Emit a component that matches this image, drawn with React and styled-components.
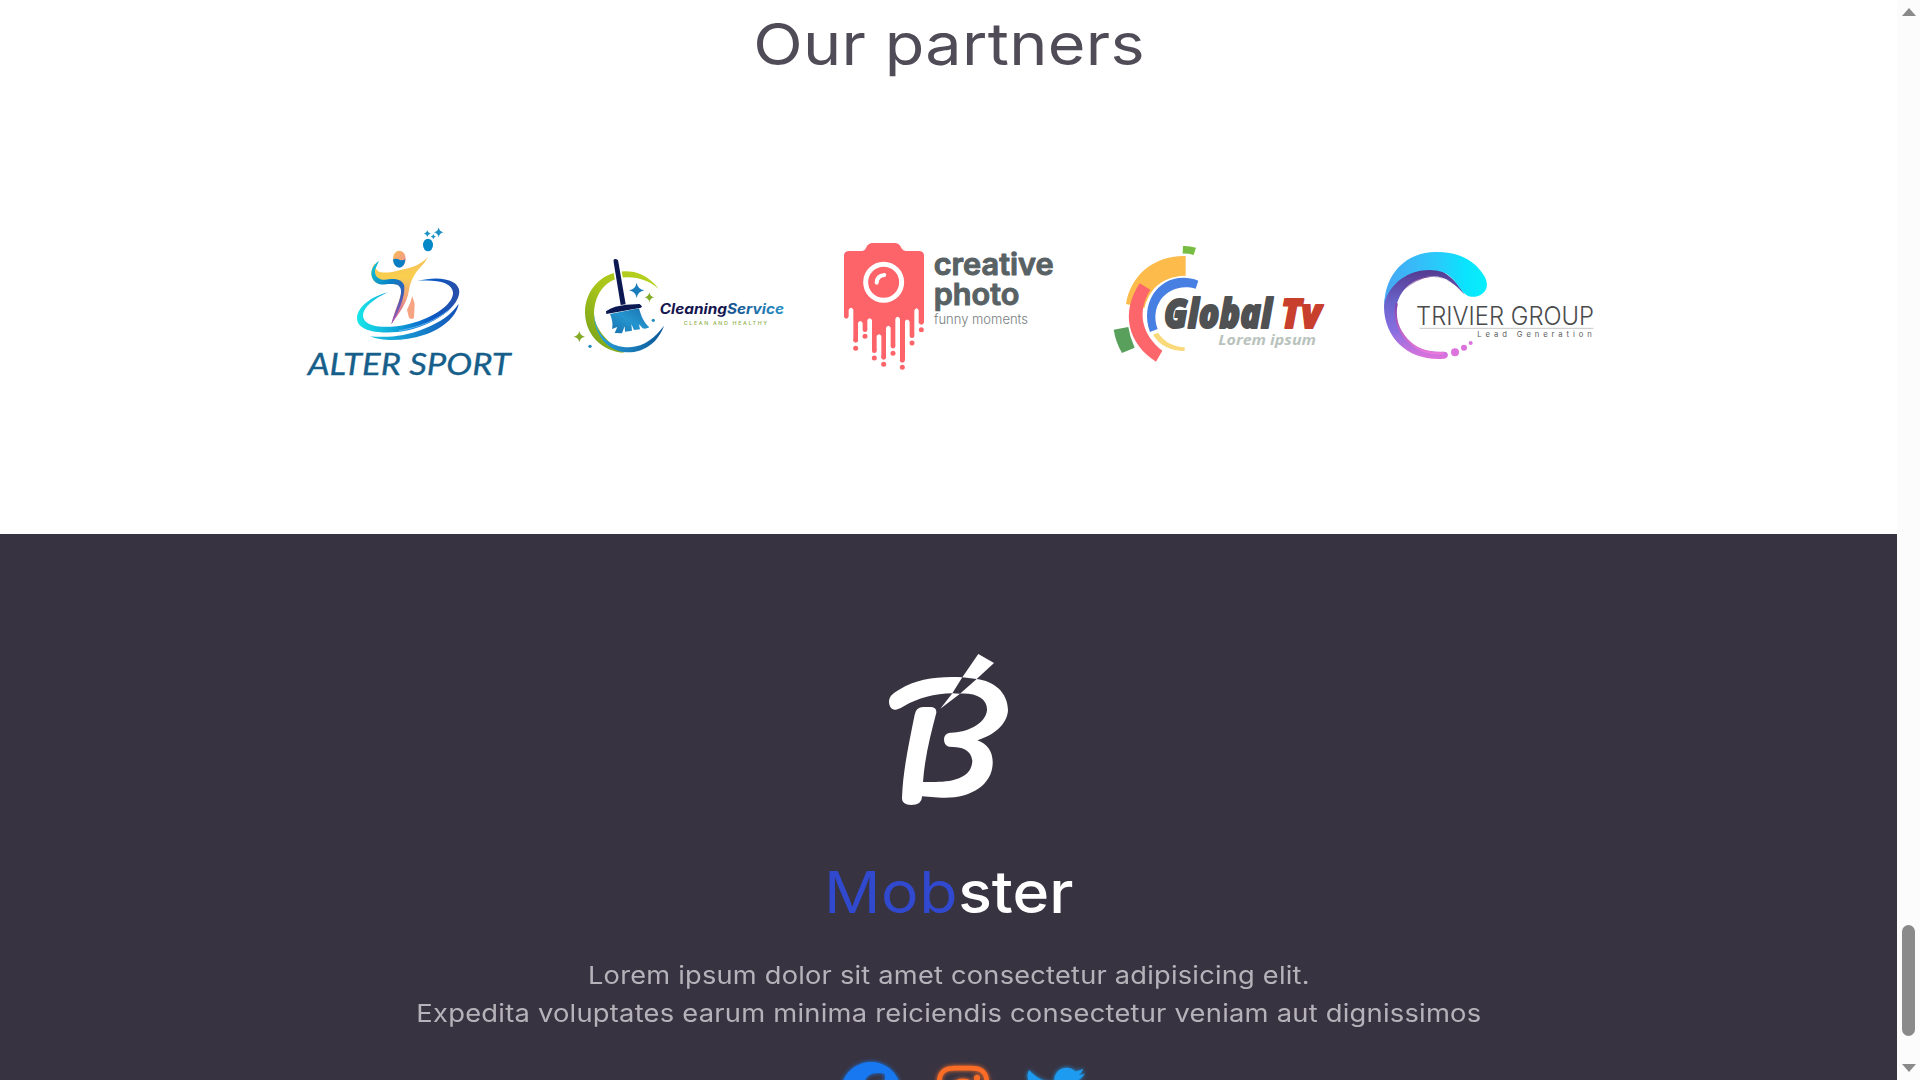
import React from "react";
import styled, { createGlobalStyle } from "styled-components";
import { FaFacebook, FaInstagram, FaTwitter } from "react-icons/fa6";

const GlobalStyle = createGlobalStyle`
  * { box-sizing: border-box; }
  body { margin: 0; overflow: hidden; background: #fff; }
`;

const Page = styled.div`
  display: grid;
  grid-template-columns: 1fr 23px;
  height: 1080px;
  overflow: hidden;
  font-family: Inter, "Liberation Sans", sans-serif;
`;

const Content = styled.main`
  display: flex;
  flex-direction: column;
  min-width: 0;
  height: 1080px;
  overflow: hidden;
`;

const Partners = styled.section`
  flex: none;
  height: 534px;
  background: #fff;
`;

const Title = styled.h2`
  margin: 0;
  padding: 8px 0 0 1px;
  height: 215px;
  font-size: 58px;
  line-height: 72px;
  font-weight: 430;
  letter-spacing: 0.3px;
  text-align: center;
  color: #504c57;
  transform: scaleX(1.115);
`;

const LogoRow = styled.div`
  display: flex;
  gap: 40px;
  padding-left: 295px;
`;

const Logo = styled.svg`
  display: block;
  flex: none;
  width: 230px;
  height: 170px;
`;

const Footer = styled.footer`
  flex: 1;
  display: flex;
  flex-direction: column;
  align-items: center;
  padding-top: 106px;
  background: #383341;
`;

const BrandMark = styled.svg`
  display: block;
  flex: none;
  width: 160px;
  height: 180px;
  margin-left: 3px;
`;

const BrandName = styled.h2`
  margin: 36px 0 0 1px;
  font-size: 58px;
  line-height: 72px;
  font-weight: 500;
  color: #fff;
  transform: scaleX(1.078);
`;

const Accent = styled.span`
  font-weight: 400;
  letter-spacing: 0.6px;
  color: #3149cf;
`;

const Tagline = styled.p`
  margin: 28px 0 0;
  font-size: 24.6px;
  line-height: 38px;
  text-align: center;
  color: #b5b2b9;
`;

const Line = styled.span`
  display: block;
  letter-spacing: 0.2px;
  transform: scaleX(${(p) => p.$stretch});
`;

const Socials = styled.div`
  display: flex;
  gap: 32px;
  margin: 30px 0 0 29px;
  font-size: 60px;
`;

const Social = styled.a`
  display: flex;
  color: ${(p) => p.$color};
  filter: drop-shadow(0 0 2px ${(p) => p.$color});
`;

const Scrollbar = styled.aside`
  display: flex;
  flex-direction: column;
  align-items: center;
  padding: 8px 0;
  background: #fcfcfc;
`;

const Arrow = styled.span`
  width: 0;
  height: 0;
  border: 7.5px solid transparent;
  border-top-width: ${(p) => (p.$up ? "0" : "8px")};
  border-bottom-width: ${(p) => (p.$up ? "8px" : "0")};
  border-top-color: ${(p) => (p.$up ? "transparent" : "#8a8a8a")};
  border-bottom-color: ${(p) => (p.$up ? "#8a8a8a" : "transparent")};
`;

const Thumb = styled.span`
  width: 13px;
  height: 111px;
  margin: 909px 0 28px;
  border-radius: 7px;
  background: #8a8a8a;
`;

const star = (x, y, r) =>
  `M${x} ${y - r}Q${x + r * 0.15} ${y - r * 0.15} ${x + r} ${y}Q${x + r * 0.15} ${y + r * 0.15} ${x} ${y + r}Q${x - r * 0.15} ${y + r * 0.15} ${x - r} ${y}Q${x - r * 0.15} ${y - r * 0.15} ${x} ${y - r}Z`;

function AlterSport() {
  return (
    <Logo viewBox="0 0 690 510">
      <defs>
        <linearGradient id="as-ring" x1="0" y1="0" x2="1" y2="0">
          <stop offset="0" stopColor="#18e6e8" />
          <stop offset=".45" stopColor="#0d96d8" />
          <stop offset=".75" stopColor="#0b56c4" />
          <stop offset="1" stopColor="#2a4fa8" />
        </linearGradient>
        <linearGradient id="as-ring2" x1="0" y1="0" x2="1" y2="0">
          <stop offset="0" stopColor="#17c6e3" />
          <stop offset="1" stopColor="#1450b8" />
        </linearGradient>
        <linearGradient id="as-blue" x1="0" y1="0" x2=".7" y2="1">
          <stop offset="0" stopColor="#14c9d6" />
          <stop offset=".5" stopColor="#0a80c6" />
          <stop offset=".8" stopColor="#3a5bb5" />
          <stop offset="1" stopColor="#b454b4" />
        </linearGradient>
        <linearGradient id="as-gold" x1="0" y1="0" x2="0" y2="1">
          <stop offset="0" stopColor="#f7c05a" />
          <stop offset=".3" stopColor="#f9cf4e" />
          <stop offset=".6" stopColor="#f3a27c" />
          <stop offset="1" stopColor="#b94fae" />
        </linearGradient>
        <linearGradient id="as-head" x1="0" y1="0" x2="1" y2="1">
          <stop offset="0" stopColor="#f9bd52" />
          <stop offset="1" stopColor="#f08e9a" />
        </linearGradient>
      </defs>
      <path d="M278 232C226 246 188 277 186 308C185 345 241 357 307 351C394 341 491 285 493 230C493 194 434 180 366 198C427 193 471 203 474 232C477 271 398 323 305 334C244 340 203 329 204 300C206 276 235 253 278 232Z" fill="url(#as-ring)" />
      <path d="M225 364C285 369 334 362 387 341C437 321 471 297 491 266C485 306 439 343 386 360C330 379 261 380 225 364Z" fill="url(#as-ring2)" />
      <path d="M312 347C370 338 423 317 463 284" fill="none" stroke="#63b4ec" strokeWidth="3" />
      <path d="M239 145C226 164 225 190 241 202C260 214 290 201 311 211C333 223 303 270 289 328C315 290 336 266 342 225C345 209 350 195 355 187C367 161 384 154 399 126C380 145 361 154 342 159C304 168 266 180 248 167C241 162 239 154 239 145Z" fill="url(#as-gold)" />
      <path d="M252 137C232 151 227 169 230 182C234 202 251 211 272 208C293 206 310 205 316 219C325 238 303 281 289 328C311 292 330 247 328 214C326 196 304 189 281 193C256 198 237 187 240 164Z" fill="url(#as-blue)" />
      <path d="M352 243L359 266L357 308Q351 315 342 308L336 284Q346 267 352 243Z" fill="#f6a482" />
      <ellipse cx="313" cy="132" rx="19" ry="25" fill="url(#as-head)" />
      <path d="M294 133Q304 129 313 134Q324 138 331 132Q329 157 313 158Q296 157 294 133Z" fill="#087fc5" />
      <ellipse cx="399" cy="90" rx="15" ry="19" fill="#0789c8" />
      <path d={star(431, 52, 15)} fill="#1e91c5" />
      <path d={star(397, 56, 10)} fill="#1e91c5" />
      <path d={star(415, 65, 8)} fill="#1e91c5" />
      <text x="38" y="481" fontFamily="Lato" fontStyle="italic" fontWeight="400" fontSize="90" fill="#175f8b" stroke="#175f8b" strokeWidth="1" textLength="609" lengthAdjust="spacingAndGlyphs">ALTER SPORT</text>
    </Logo>
  );
}

function CleaningService() {
  return (
    <Logo viewBox="0 -90 690 510">
      <defs>
        <linearGradient id="cs-green" x1="0" y1="1" x2="1" y2="0">
          <stop offset="0" stopColor="#6f9c1c" />
          <stop offset=".5" stopColor="#a9c51a" />
          <stop offset="1" stopColor="#b9d320" />
        </linearGradient>
        <linearGradient id="cs-blue" x1="0" y1="0" x2="1" y2="0">
          <stop offset="0" stopColor="#2aa6df" />
          <stop offset="1" stopColor="#0b5696" />
        </linearGradient>
        <linearGradient id="cs-brush" x1="0" y1="1" x2="1" y2="0">
          <stop offset="0" stopColor="#1670ab" />
          <stop offset=".5" stopColor="#2595cf" />
          <stop offset="1" stopColor="#1a6fac" />
        </linearGradient>
        <linearGradient id="cs-text" gradientUnits="userSpaceOnUse" x1="489" y1="0" x2="657" y2="0">
          <stop offset="0" stopColor="#124f8c" />
          <stop offset="1" stopColor="#2790c5" />
        </linearGradient>
      </defs>
      <path d="M282 132C249 91 216 79 181 79C106 81 60 139 60 203C61 270 113 320 178 323C136 300 88 254 87 207C89 140 127 99 184 97C222 96 252 108 282 132Z" fill="url(#cs-green)" />
      <path d="M87 207C94 277 139 308 194 307C240 303 270 278 297 242C281 289 239 324 184 322C126 319 87 266 87 207Z" fill="url(#cs-blue)" />
      <path d="M146 52Q144 42 151 42Q159 42 160 50L182 178L167 180Z" fill="#0b1852" stroke="#fff" strokeWidth="10" paintOrder="stroke" />
      <path d="M123 199L136 191Q151 184 166 182L184 179L224 177L231 184L228 188L124 207Z" fill="#0b1852" />
      <path d="M135 207L222 190C228 213 237 234 253 247Q242 253 233 250L222 238L225 253L207 255L199 237L201 257L180 260L179 244L171 265L149 264L157 246L141 252C145 235 140 220 135 207Z" fill="url(#cs-brush)" />
      <path d={star(215, 136, 23)} fill="#187cbb" />
      <path d={star(253, 157, 15)} fill="#84ac26" />
      <path d={star(43, 275, 17)} fill="#84ac26" />
      <circle cx="265" cy="226" r="5" fill="#278dbf" />
      <circle cx="75" cy="304" r="5" fill="#278dbf" />
      <text x="284" y="208" fontFamily="Inter" fontStyle="italic" fontWeight="700" fontSize="42" fill="#15164f" textLength="373" lengthAdjust="spacingAndGlyphs">Cleaning<tspan fill="url(#cs-text)">Service</tspan></text>
      <text x="356" y="241" fontFamily="Inter" fontWeight="500" fontSize="16" fill="#8fb04a" textLength="250">CLEAN AND HEALTHY</text>
    </Logo>
  );
}

function CreativePhoto() {
  const drips = [[62, 320, 340], [90, 288, 304], [118, 351, 369], [146, 371, 388], [174, 337, 355], [202, 380, 397], [231, 306, 324], [259, 266, 284]];
  return (
    <Logo viewBox="0 -60 690 510">
      <path d="M40 48H82Q90 47 93 39Q98 25 111 24H181Q194 25 199 39Q203 47 212 48H254Q266 49 267 61V263H251V226Q245 214 238 226V300H224V260Q217 248 210 258V375H195V251Q188 240 181 251V332H167V278Q160 266 153 278V366H139V302Q132 293 125 302V346H111V255Q104 244 97 255V282H83V264Q76 252 69 264V315H55V224Q48 212 41 224V245Q34 257 27 246V61Q28 49 40 48Z" fill="#fd6469" />
      {drips.map(([x, end, dot]) => (
        <g key={x} fill="#fd6469">
          <circle cx={x} cy={end - 4} r="7.3" />
          <circle cx={x} cy={dot} r="7.5" />
        </g>
      ))}
      <circle cx="146" cy="142" r="54" fill="none" stroke="#fff" strokeWidth="15" />
      <path d="M125 143Q126 122 148 120" fill="none" stroke="#fff" strokeWidth="12" strokeLinecap="round" />
      <g fontFamily="Inter" fontWeight="600" fill="#586164" stroke="#586164" strokeWidth="3" strokeLinejoin="round">
        <text x="296" y="119" fontSize="92" textLength="360" lengthAdjust="spacingAndGlyphs">creative</text>
        <text x="296" y="210" fontSize="90" textLength="257" lengthAdjust="spacingAndGlyphs">photo</text>
      </g>
      <text x="297" y="268" fontFamily="Inter" fontWeight="300" fontSize="39" fill="#777e80" textLength="282" lengthAdjust="spacingAndGlyphs">funny moments</text>
    </Logo>
  );
}

function GlobalTv() {
  return (
    <Logo viewBox="0 -60 690 510">
      <path d="M234 33Q253 32 273 38L266 60Q249 55 233 56Z" fill="#78bd43" />
      <path d="M242 63V122Q182 123 147 161Q127 184 118 219L63 207C77 119 149 60 242 63Z" fill="#fdbb4b" />
      <path d="M104 145L136 164C94 232 111 299 172 347L153 380C68 326 46 233 104 145Z" fill="#fd666b" />
      <path d="M280 137L272 161C195 138 130 205 158 282L135 291C99 191 180 99 280 137Z" fill="#477fe3" />
      <path d="M144 299L159 293C178 321 203 334 239 337V348C199 348 163 332 144 299Z" fill="#f9d97a" />
      <path d="M26 284L70 276Q75 308 89 338L51 354Q32 321 26 284Z" fill="#58a05b" />
      <g fontFamily="Open Sans" fontStyle="italic" fontWeight="800" fontSize="124" strokeWidth="6" strokeLinejoin="round">
        <text x="177" y="279" fill="#505152" stroke="#505152" textLength="324" lengthAdjust="spacingAndGlyphs">Global</text>
        <text x="528" y="279" fill="#c8402d" stroke="#c8402d" textLength="121" lengthAdjust="spacingAndGlyphs">Tv</text>
      </g>
      <text x="340" y="329" fontFamily="Open Sans" fontStyle="italic" fontWeight="700" fontSize="43" fill="#b9c3bd" textLength="293" lengthAdjust="spacingAndGlyphs">Lorem ipsum</text>
    </Logo>
  );
}

function TrivierGroup() {
  return (
    <Logo viewBox="0 -75 690 510">
      <defs>
        <linearGradient id="tg-cyan" x1="0" y1="0" x2="1" y2="0">
          <stop offset="0" stopColor="#48a6f4" />
          <stop offset=".5" stopColor="#2bc9fa" />
          <stop offset=".8" stopColor="#09e4fd" />
          <stop offset="1" stopColor="#08effc" />
        </linearGradient>
        <linearGradient id="tg-purple" x1="0" y1="0" x2="0" y2="1">
          <stop offset="0" stopColor="#53378a" />
          <stop offset=".4" stopColor="#6a65ce" />
          <stop offset=".7" stopColor="#886fe0" />
          <stop offset="1" stopColor="#df73dc" />
        </linearGradient>
        <linearGradient id="tg-dark" x1="0" y1="0" x2="1" y2="0">
          <stop offset="0" stopColor="#693b9f" stopOpacity="0" />
          <stop offset=".45" stopColor="#71388d" />
          <stop offset="1" stopColor="#352f68" />
        </linearGradient>
        <linearGradient id="tg-pink" x1="0" y1="0" x2="0" y2="1">
          <stop offset="0" stopColor="#8145ae" />
          <stop offset="1" stopColor="#e979dc" />
        </linearGradient>
      </defs>
      <path d="M269 164C240 115 202 85 158 82C87 77 30 125 27 200C28 299 106 365 208 356Q218 354 219 345Q218 335 207 335C124 340 65 292 63 219C62 160 110 109 177 109C216 110 245 137 269 164Z" fill="url(#tg-purple)" />
      <path d="M68 165C102 102 210 81 269 164C223 106 165 94 107 135Z" fill="url(#tg-dark)" />
      <path d="M65 190C48 274 117 348 207 339" fill="none" stroke="url(#tg-pink)" strokeWidth="7" />
      <path d="M28 193C31 94 101 34 186 36C257 36 302 65 328 108C350 147 321 173 288 170C256 166 247 112 203 96C134 74 46 112 28 193Z" fill="url(#tg-cyan)" />
      <circle cx="240" cy="337" r="12" fill="#dc72db" />
      <circle cx="267" cy="323" r="9" fill="#dc72db" />
      <circle cx="287" cy="309" r="6" fill="#dc72db" />
      <text x="123" y="256" fontFamily="Inter" fontWeight="300" fontSize="75" fill="#4a4b4c" textLength="534" lengthAdjust="spacingAndGlyphs">TRIVIER GROUP</text>
      <path d="M134 265H655" stroke="#aaa" strokeWidth="2" />
      <text x="307" y="291" fontFamily="Inter" fontWeight="400" fontSize="23" fill="#5a5b5c" textLength="343">Lead Generation</text>
    </Logo>
  );
}

export default function App() {
  return (
    <Page>
      <GlobalStyle />
      <Content>
        <Partners>
          <Title>Our partners</Title>
          <LogoRow>
            <AlterSport />
            <CleaningService />
            <CreativePhoto />
            <GlobalTv />
            <TrivierGroup />
          </LogoRow>
        </Partners>
        <Footer>
          <BrandMark viewBox="0 0 480 540">
            <path d="M78 209C64 211 57 199 57 184C58 165 74 158 91 147C139 118 203 108 277 112L247 160C195 160 142 176 104 197Q91 206 78 209Z" fill="#fff" />
            <path d="M325 42L372 69L320 117L277 112Z" fill="#fff" />
            <path d="M247 160L270 161L211 206Z" fill="#fff" />
            <path d="M320 117C371 123 413 156 414 211C411 254 372 286 322 301C352 312 370 336 368 372C365 438 297 477 214 473L156 469Q157 495 123 495Q95 494 96 474C99 389 117 310 134 224Q138 201 160 201H184Q200 202 199 218C181 286 164 354 159 426C198 426 234 428 267 415C295 403 306 386 307 362C303 330 279 320 237 320Q222 317 222 298Q223 280 240 278C279 280 346 257 351 211C353 178 321 158 270 161Z" fill="#fff" />
          </BrandMark>
          <BrandName><Accent>Mob</Accent>ster</BrandName>
          <Tagline>
            <Line $stretch={1.107}>Lorem ipsum dolor sit amet consectetur adipisicing elit.</Line>
            <Line $stretch={1.112}>Expedita voluptates earum minima reiciendis consectetur veniam aut dignissimos</Line>
          </Tagline>
          <Socials>
            <Social $color="#1778f2"><FaFacebook /></Social>
            <Social $color="#fb6d27"><FaInstagram /></Social>
            <Social $color="#1d9bf0"><FaTwitter /></Social>
          </Socials>
        </Footer>
      </Content>
      <Scrollbar>
        <Arrow $up />
        <Thumb />
        <Arrow />
      </Scrollbar>
    </Page>
  );
}
